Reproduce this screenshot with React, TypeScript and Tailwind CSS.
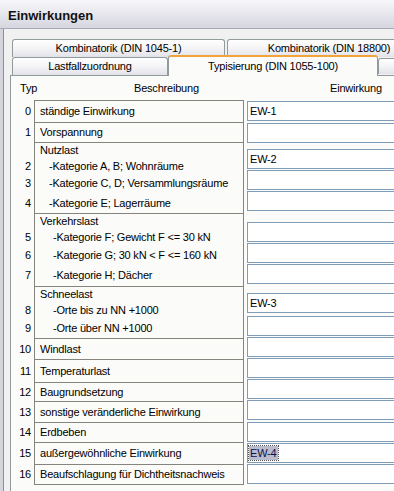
import React from "react";

type Line = { n?: string; text?: string; indent?: string; h: string };
type Cell = { lines: Line[] };

const cells: Cell[] = [
  { lines: [{ n: "0", text: "ständige Einwirkung", h: "h-[21px]" }] },
  { lines: [{ n: "1", text: "Vorspannung", h: "h-[19px]" }] },
  {
    lines: [
      { text: "Nutzlast", h: "h-[15px]" },
      { n: "2", text: "-Kategorie A, B; Wohnräume", indent: "pl-[9px]", h: "h-[16px]" },
      { n: "3", text: "-Kategorie C, D; Versammlungsräume", indent: "pl-[9px]", h: "h-[19px]" },
      { n: "4", text: "-Kategorie E; Lagerräume", indent: "pl-[9px]", h: "h-[20px]" },
    ],
  },
  {
    lines: [
      { text: "Verkehrslast", h: "h-[15px]" },
      { n: "5", text: "-Kategorie F; Gewicht F <= 30 kN", indent: "pl-[13px]", h: "h-[16px]" },
      { n: "6", text: "-Kategorie G; 30 kN < F <= 160 kN", indent: "pl-[13px]", h: "h-[20px]" },
      { n: "7", text: "-Kategorie H; Dächer", indent: "pl-[13px]", h: "h-[21px]" },
    ],
  },
  {
    lines: [
      { text: "Schneelast", h: "h-[15px]" },
      { n: "8", text: "-Orte bis zu NN +1000", indent: "pl-[13px]", h: "h-[16px]" },
      { n: "9", text: "-Orte über NN +1000", indent: "pl-[13px]", h: "h-[20px]" },
    ],
  },
  { lines: [{ n: "10", text: "Windlast", h: "h-[20px]" }] },
  { lines: [{ n: "11", text: "Temperaturlast", h: "h-[22px]" }] },
  { lines: [{ n: "12", text: "Baugrundsetzung", h: "h-[18px]" }] },
  { lines: [{ n: "13", text: "sonstige veränderliche Einwirkung", h: "h-[20px]" }] },
  { lines: [{ n: "14", text: "Erdbeben", h: "h-[19px]" }] },
  { lines: [{ n: "15", text: "außergewöhnliche Einwirkung", h: "h-[21px]" }] },
  { lines: [{ n: "16", text: "Beaufschlagung für Dichtheitsnachweis", h: "h-[19px]" }] },
];

const inputs = [
  { mt: "mt-[1px]", v: "EW-1" },
  { mt: "mt-[2px]", v: "" },
  { mt: "mt-[6px]", v: "EW-2" },
  { mt: "mt-[1px]", v: "" },
  { mt: "mt-[1px]", v: "" },
  { mt: "mt-[11px]", v: "" },
  { mt: "mt-[1px]", v: "" },
  { mt: "mt-[1px]", v: "" },
  { mt: "mt-[9px]", v: "EW-3" },
  { mt: "mt-[3px]", v: "" },
  { mt: "mt-[1px]", v: "" },
  { mt: "mt-[1px]", v: "" },
  { mt: "mt-[1px]", v: "" },
  { mt: "mt-[1px]", v: "" },
  { mt: "mt-[2px]", v: "" },
  { mt: "mt-[1px]", v: "EW-4", sel: true },
  { mt: "mt-[1px]", v: "" },
];

const tabBase =
  "flex items-center justify-center border border-b-0 border-[#919b9c] rounded-t-[3px] bg-gradient-to-b from-white via-[#f4f4f6] to-[#e2e2ea] shrink-0";

export default function App() {
  return (
    <div
      className="w-[394px] h-[491px] overflow-hidden bg-[#f1f1f1] text-[11px] tracking-[-0.2px] text-black flex flex-col"
      style={{ fontFamily: '"Liberation Sans", Arial, sans-serif' }}
    >
      {/* Title bar */}
      <div className="h-[29px] shrink-0 flex items-center pl-2 pt-[4px] bg-gradient-to-b from-[#f7f7fa] to-[#d6d6e0] border-b border-[#a9a9b6]">
        <span className="text-[13px] font-bold tracking-normal text-[#111]">Einwirkungen</span>
      </div>

      <div className="flex flex-1 min-h-0">
        {/* window frame */}
        <div className="w-[4px] shrink-0 bg-[#d4d4dc] border-r border-[#8e8e9a]" />

        <div className="flex-1 min-w-0 pl-[6px] pt-[10px] flex flex-col">
          {/* Tab row 1 */}
          <div className="flex ml-[2px] gap-[2px] h-[18px]">
            <div className={`${tabBase} w-[213px] h-[18px]`}>Kombinatorik (DIN 1045-1)</div>
            <div className={`${tabBase} w-[204px] h-[18px]`}>Kombinatorik (DIN 18800)</div>
          </div>
          {/* Tab row 2 */}
          <div className="flex ml-[2px] h-[18px] items-end">
            <div className={`${tabBase} w-[156px] h-[18px]`}>Lastfallzuordnung</div>
            <div className="relative z-10 -mb-px shrink-0 w-[210px] h-[21px] flex items-center justify-center bg-[#fbfbf9] border border-b-0 border-[#919b9c] border-t-[2px] border-t-[#f0a43a] rounded-t-[3px]">
              Typisierung (DIN 1055-100)
            </div>
            <div className={`${tabBase} w-[100px] h-[16px] mb-[1px]`} />
          </div>

          {/* Content panel */}
          <div className="flex-1 bg-[#fbfbf9] border-t border-l border-[#919b9c] pl-[9px]">
            {/* header */}
            <div className="flex h-[24px] items-center">
              <div className="w-[114px]">Typ</div>
              <div className="w-[196px]">Beschreibung</div>
              <div>Einwirkung</div>
            </div>

            <div className="flex">
              {/* Typ + Beschreibung */}
              <div className="flex flex-col w-[224px] shrink-0">
                {cells.map((c, i) => (
                  <div key={i} className="flex">
                    <div className="w-[14px] pr-[3px] flex flex-col items-end">
                      {c.lines.map((l, j) => (
                        <div key={j} className={`${l.h} flex items-center ${i === 0 ? "mt-px" : ""}`}>
                          {l.n}
                        </div>
                      ))}
                    </div>
                    <div
                      className={`w-[210px] border-x border-b border-[#86857d] pl-[5px] flex flex-col ${
                        i === 0 ? "border-t" : ""
                      }`}
                    >
                      {c.lines.map((l, j) => (
                        <div key={j} className={`${l.h} flex items-center whitespace-nowrap ${l.indent ?? ""}`}>
                          {l.text}
                        </div>
                      ))}
                    </div>
                  </div>
                ))}
              </div>

              {/* Einwirkung inputs */}
              <div className="ml-[3px] flex flex-col w-[200px] shrink-0">
                {inputs.map((inp, i) => (
                  <div
                    key={i}
                    className={`${inp.mt} h-[20px] bg-white border border-[#7f9db9] flex items-center pl-[1px]`}
                  >
                    {inp.sel ? (
                      <span className="bg-[#b9bccb] text-[#101050] px-[1px] h-[14px] leading-[14px] outline-1 outline-dotted outline-[#555]">
                        {inp.v}
                      </span>
                    ) : (
                      <span className="pl-px">{inp.v}</span>
                    )}
                  </div>
                ))}
              </div>
            </div>
          </div>
        </div>
      </div>
    </div>
  );
}
